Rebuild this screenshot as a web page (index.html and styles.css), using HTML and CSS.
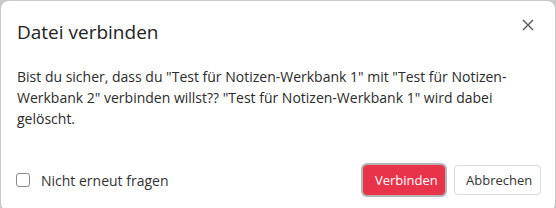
FILE: index.html
```html
<!DOCTYPE html>
<html lang="de">
<head>
<meta charset="utf-8">
<link rel="stylesheet" href="styles.css">
</head>
<body>
<div class="dialog">
  <div class="header">
    <h1 class="title">Datei verbinden</h1>
    <button class="close" aria-label="Schließen">
      <svg width="12" height="12" viewBox="0 0 12 12"><path d="M1 1L11 11M11 1L1 11" stroke="#555" stroke-width="1.4" fill="none"/></svg>
    </button>
  </div>
  <div class="content">
    <p class="message">Bist du sicher, dass du "Test für Notizen-Werkbank 1" mit "Test für Notizen-Werkbank 2" verbinden willst?? "Test für Notizen-Werkbank 1" wird dabei gelöscht.</p>
  </div>
  <div class="footer">
    <label class="check"><span class="box"></span><span>Nicht erneut fragen</span></label>
    <div class="actions">
      <button class="btn primary">Verbinden</button>
      <button class="btn secondary">Abbrechen</button>
    </div>
  </div>
</div>
</body>
</html>
```
FILE: styles.css
```css
html, body { margin: 0; padding: 0; }
body {
  background: #c9c9c9;
  font-family: "Open Sans", "Noto Sans", sans-serif;
  color: #333;
  width: 556px;
  height: 208px;
  overflow: hidden;
}
.dialog {
  margin: 1px 1px 0 1px;
  background: #fff;
  border-radius: 8px;
  height: 210px;
  display: flex;
  flex-direction: column;
}
.header {
  display: flex;
  justify-content: space-between;
  align-items: flex-start;
  padding: 17px 16px 0 16px;
}
.title {
  margin: 0;
  font-size: 19px;
  font-weight: 400;
  line-height: 28px;
  color: #222;
}
.close {
  border: 0;
  background: none;
  padding: 0;
  margin: 1px 5px 0 0;
  width: 12px;
  height: 12px;
  display: flex;
}
.content {
  padding: 20px 16px 0 16px;
}
.message {
  margin: 0;
  font-size: 14px;
  line-height: 21px;
  color: #2b2b2b;
}
.footer {
  display: flex;
  justify-content: space-between;
  align-items: center;
  padding: 0 14px 0 15px;
  margin-top: 36px;
}
.check {
  display: flex;
  align-items: center;
  gap: 11px;
  font-size: 14px;
  color: #333;
}
.box {
  width: 12px;
  height: 12px;
  border: 1px solid #8a8a8a;
  border-radius: 3px;
  background: #fff;
}
.actions {
  display: flex;
  align-items: center;
  gap: 9px;
}
.btn {
  font-family: inherit;
  font-size: 13px;
  height: 30px;
  border-radius: 4px;
  padding: 0 11px;
  cursor: pointer;
}
.primary {
  background: #e8334b;
  color: #fff;
  border: 1px solid #e8334b;
  width: 82px;
  box-shadow: 0 0 0 2px #b5b5b5;
}
.secondary {
  background: #fff;
  color: #333;
  border: 1px solid #dcdcdc;
  width: 87px;
}
```
